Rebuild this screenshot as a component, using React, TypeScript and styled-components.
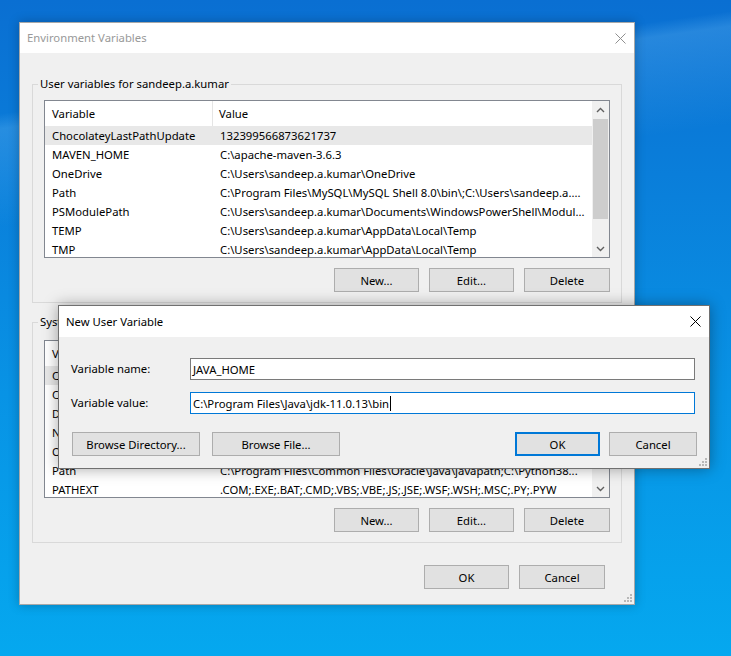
import React from 'react';
import styled, { createGlobalStyle, css } from 'styled-components';

const GlobalStyle = createGlobalStyle`
  html, body {
    margin: 0;
    padding: 0;
  }
  body {
    width: 731px;
    height: 656px;
    overflow: hidden;
    font-family: 'Segoe UI', 'Noto Sans', 'Open Sans', sans-serif;
    font-size: 11.3px;
    color: #000;
  }
  * {
    box-sizing: border-box;
  }
`;

interface IVar {
  name: string;
  value: string;
}

const userVars: IVar[] = [
  { name: 'ChocolateyLastPathUpdate', value: '132399566873621737' },
  { name: 'MAVEN_HOME', value: 'C:\\apache-maven-3.6.3' },
  { name: 'OneDrive', value: 'C:\\Users\\sandeep.a.kumar\\OneDrive' },
  { name: 'Path', value: 'C:\\Program Files\\MySQL\\MySQL Shell 8.0\\bin\\;C:\\Users\\sandeep.a....' },
  { name: 'PSModulePath', value: 'C:\\Users\\sandeep.a.kumar\\Documents\\WindowsPowerShell\\Modul...' },
  { name: 'TEMP', value: 'C:\\Users\\sandeep.a.kumar\\AppData\\Local\\Temp' },
  { name: 'TMP', value: 'C:\\Users\\sandeep.a.kumar\\AppData\\Local\\Temp' },
];

const systemVars: IVar[] = [
  { name: 'ChocolateyInstall', value: 'C:\\ProgramData\\chocolatey' },
  { name: 'ComSpec', value: 'C:\\WINDOWS\\system32\\cmd.exe' },
  { name: 'DriverData', value: 'C:\\Windows\\System32\\Drivers\\DriverData' },
  { name: 'NUMBER_OF_PROCESSORS', value: '8' },
  { name: 'OS', value: 'Windows_NT' },
  { name: 'Path', value: 'C:\\Program Files\\Common Files\\Oracle\\Java\\javapath;C:\\Python38...' },
  { name: 'PATHEXT', value: '.COM;.EXE;.BAT;.CMD;.VBS;.VBE;.JS;.JSE;.WSF;.WSH;.MSC;.PY;.PYW' },
];

const CloseIcon = ({ color }: { color: string }) => (
  <svg width="11" height="11" viewBox="0 0 11 11">
    <path d="M0.5 0.5 L10.5 10.5 M10.5 0.5 L0.5 10.5" stroke={color} strokeWidth="1" fill="none" />
  </svg>
);

const Grip = () => (
  <GripWrap>
    <svg width="9" height="9" viewBox="0 0 9 9">
      <g fill="#b8b8b8">
        <rect x="7" y="1" width="2" height="2" />
        <rect x="4" y="4" width="2" height="2" />
        <rect x="7" y="4" width="2" height="2" />
        <rect x="1" y="7" width="2" height="2" />
        <rect x="4" y="7" width="2" height="2" />
        <rect x="7" y="7" width="2" height="2" />
      </g>
    </svg>
  </GripWrap>
);

const Arrow = ({ up }: { up?: boolean }) => (
  <svg width="9" height="6" viewBox="0 0 9 6">
    <path
      d={up ? 'M1 5 L4.5 1.5 L8 5' : 'M1 1 L4.5 4.5 L8 1'}
      stroke="#606060"
      strokeWidth="1.4"
      fill="none"
    />
  </svg>
);

const VarList = ({ rows, thumbTop, thumbHeight }: { rows: IVar[]; thumbTop: number; thumbHeight: number }) => (
  <ListView>
    <ListBody>
      <HeaderRow>
        <HeaderCell $first>Variable</HeaderCell>
        <HeaderCell>Value</HeaderCell>
      </HeaderRow>
      {rows.map((r, i) => (
        <Row key={r.name} $selected={i === 0}>
          <NameCell>{r.name}</NameCell>
          <ValueCell>{r.value}</ValueCell>
        </Row>
      ))}
    </ListBody>
    <ScrollBar>
      <ScrollArrow>
        <Arrow up />
      </ScrollArrow>
      <Track>
        <Thumb $top={thumbTop} $height={thumbHeight} />
      </Track>
      <ScrollArrow>
        <Arrow />
      </ScrollArrow>
    </ScrollBar>
  </ListView>
);

export default function App() {
  return (
    <Desktop>
      <GlobalStyle />
      <Window $left={19} $top={22} $width={616} $height={583}>
        <TitleBar $height={30}>
          <Title $inactive>Environment Variables</Title>
          <CloseBox $right={8}>
            <CloseIcon color="#8f8f8f" />
          </CloseBox>
        </TitleBar>
        <MainBody>
          <Group $top={8}>
            <Legend>User variables for sandeep.a.kumar</Legend>
            <VarList rows={userVars} thumbTop={1} thumbHeight={100} />
            <ButtonRow>
              <Button $width={85}>New...</Button>
              <Button $width={85}>Edit...</Button>
              <Button $width={86}>Delete</Button>
            </ButtonRow>
          </Group>
          <Group $top={10} $spaced>
            <Legend>System variables</Legend>
            <VarList rows={systemVars} thumbTop={1} thumbHeight={60} />
            <ButtonRow>
              <Button $width={85}>New...</Button>
              <Button $width={85}>Edit...</Button>
              <Button $width={86}>Delete</Button>
            </ButtonRow>
          </Group>
          <FooterRow>
            <Button $width={85}>OK</Button>
            <Button $width={86}>Cancel</Button>
          </FooterRow>
        </MainBody>
        <Grip />
      </Window>

      <Window $left={58} $top={305} $width={652} $height={164} $active>
        <TitleBar $height={31}>
          <Title>New User Variable</Title>
          <CloseBox $right={8}>
            <CloseIcon color="#000" />
          </CloseBox>
        </TitleBar>
        <DialogBody>
          <Form>
            <FieldLabel>Variable name:</FieldLabel>
            <TextInput>JAVA_HOME</TextInput>
            <FieldLabel>Variable value:</FieldLabel>
            <TextInput $focused>
              C:\Program Files\Java\jdk-11.0.13\bin
              <Caret />
            </TextInput>
          </Form>
          <DialogButtons>
            <ButtonGroup $gap={12}>
              <Button $width={128}>Browse Directory...</Button>
              <Button $width={128}>Browse File...</Button>
            </ButtonGroup>
            <ButtonGroup $gap={9} $pullRight>
              <Button $width={85} $default>
                OK
              </Button>
              <Button $width={88}>Cancel</Button>
            </ButtonGroup>
          </DialogButtons>
        </DialogBody>
        <Grip />
      </Window>
    </Desktop>
  );
}

const Desktop = styled.div`
  position: relative;
  width: 731px;
  height: 656px;
  overflow: hidden;
  background:
    linear-gradient(172deg, rgba(255, 255, 255, 0) 15%, rgba(140, 210, 255, 0.22) 17%, rgba(255, 255, 255, 0) 30%),
    linear-gradient(180deg, #0a6fd2 0%, #0a80db 30%, #0893e5 60%, #05a8ef 100%);
`;

const Window = styled.div<{ $left: number; $top: number; $width: number; $height: number; $active?: boolean }>`
  position: absolute;
  left: ${p => p.$left}px;
  top: ${p => p.$top}px;
  width: ${p => p.$width}px;
  height: ${p => p.$height}px;
  display: flex;
  flex-direction: column;
  background: #f0f0f0;
  border: 1px solid ${p => (p.$active ? '#707070' : '#a8a8a8')};
  box-shadow: 0 0 ${p => (p.$active ? '14px' : '10px')} rgba(0, 0, 0, ${p => (p.$active ? 0.35 : 0.25)});
`;

const TitleBar = styled.div<{ $height: number }>`
  height: ${p => p.$height}px;
  flex: none;
  display: flex;
  align-items: center;
  justify-content: space-between;
  padding-left: 7px;
  background: #fff;
  font-size: 12px;
`;

const Title = styled.span<{ $inactive?: boolean }>`
  color: ${p => (p.$inactive ? '#999' : '#000')};
  line-height: 16px;
  font-size: 11.3px;
`;

const CloseBox = styled.div<{ $right: number }>`
  display: flex;
  align-items: center;
  margin-right: ${p => p.$right}px;
`;

const MainBody = styled.div`
  flex: 1;
  display: flex;
  flex-direction: column;
  padding: 23px 12px 0 12px;
`;

const Group = styled.fieldset<{ $spaced?: boolean; $top: number }>`
  margin: ${p => (p.$spaced ? '11px' : '0')} 0 0 0;
  padding: ${p => p.$top}px 11px 10px 11px;
  border: 1px solid #d9d9d9;
  min-width: 0;
`;

const Legend = styled.legend`
  padding: 0 2px;
  margin-left: -6px;
  line-height: 16px;
`;

const ListView = styled.div`
  display: flex;
  height: 158px;
  border: 1px solid #828790;
  background: #fff;
  overflow: hidden;
`;

const ListBody = styled.div`
  flex: 1;
  min-width: 0;
  overflow: hidden;
`;

const HeaderRow = styled.div`
  display: flex;
  height: 25px;
`;

const HeaderCell = styled.div<{ $first?: boolean }>`
  display: flex;
  align-items: center;
  line-height: 16px;
  ${p =>
    p.$first
      ? css`
          width: 168px;
          padding-left: 7px;
          border-right: 1px solid #e5e5e5;
        `
      : css`
          flex: 1;
          padding-left: 6px;
        `}
`;

const Row = styled.div<{ $selected?: boolean }>`
  display: flex;
  align-items: center;
  height: 19px;
  white-space: nowrap;
  background: ${p => (p.$selected ? '#e8e8e8' : 'transparent')};
`;

const NameCell = styled.div`
  width: 168px;
  flex: none;
  padding-left: 7px;
  overflow: hidden;
`;

const ValueCell = styled.div`
  flex: 1;
  min-width: 0;
  padding-left: 7px;
  overflow: hidden;
`;

const ScrollBar = styled.div`
  width: 17px;
  flex: none;
  display: flex;
  flex-direction: column;
  background: #f0f0f0;
`;

const ScrollArrow = styled.div`
  height: 17px;
  flex: none;
  display: flex;
  align-items: center;
  justify-content: center;
`;

const Track = styled.div`
  flex: 1;
  position: relative;
`;

const Thumb = styled.div<{ $top: number; $height: number }>`
  position: absolute;
  left: 1px;
  right: 1px;
  top: ${p => p.$top}px;
  height: ${p => p.$height}px;
  background: #cdcdcd;
`;

const ButtonRow = styled.div`
  display: flex;
  justify-content: flex-end;
  gap: 10px;
  margin-top: 10px;
`;

const FooterRow = styled.div`
  display: flex;
  justify-content: flex-end;
  gap: 10px;
  margin-top: 22px;
  padding-right: 17px;
`;

const Button = styled.button<{ $width: number; $default?: boolean }>`
  width: ${p => p.$width}px;
  height: 24px;
  padding: 0;
  margin: 0;
  font: inherit;
  color: #000;
  background: #e1e1e1;
  border: 1px solid #adadad;
  ${p =>
    p.$default &&
    css`
      border: 2px solid #0078d7;
    `}
`;

const DialogBody = styled.div`
  flex: 1;
  display: flex;
  flex-direction: column;
  padding: 21px 14px 0 12px;
`;

const Form = styled.div`
  display: grid;
  grid-template-columns: 119px 1fr;
  row-gap: 12px;
  align-items: center;
`;

const FieldLabel = styled.div`
  line-height: 16px;
`;

const TextInput = styled.div<{ $focused?: boolean }>`
  height: 22px;
  display: flex;
  align-items: center;
  padding-left: 2px;
  background: #fff;
  border: 1px solid ${p => (p.$focused ? '#0078d7' : '#7a7a7a')};
  white-space: pre;
`;

const Caret = styled.span`
  display: inline-block;
  width: 1px;
  height: 15px;
  margin-left: 1px;
  background: #000;
`;

const DialogButtons = styled.div`
  display: flex;
  justify-content: space-between;
  margin-top: 18px;
  padding-left: 1px;
`;

const ButtonGroup = styled.div<{ $gap: number; $pullRight?: boolean }>`
  display: flex;
  gap: ${p => p.$gap}px;
  margin-right: ${p => (p.$pullRight ? '-2px' : '0')};
`;

const GripWrap = styled.div`
  position: absolute;
  right: 2px;
  bottom: 2px;
  display: flex;
`;
